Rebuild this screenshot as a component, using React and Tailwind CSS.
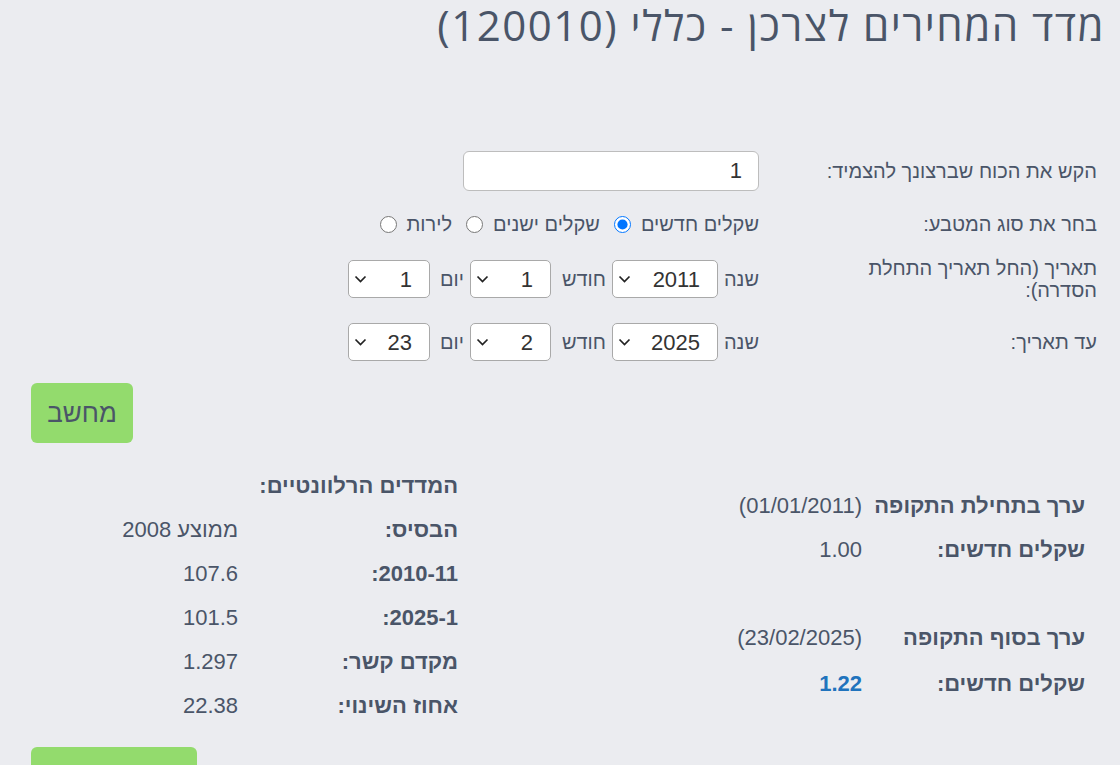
import { useState } from "react";

function Chevron() {
  return (
    <svg
      className="pointer-events-none absolute left-[6px] top-1/2 -translate-y-1/2"
      width="13"
      height="8"
      viewBox="0 0 13 8"
      fill="none"
    >
      <path d="M1.5 1.5l5 5 5-5" stroke="#222" strokeWidth="1.7" />
    </svg>
  );
}

function Bchira({ value, width }) {
  return (
    <div className={`relative ${width}`}>
      <select
        defaultValue={value}
        className="h-[38px] w-full appearance-none rounded-[5px] border border-[#a9a9a9] bg-white pr-[17px] pl-[30px] text-[22px] text-[#333]"
      >
        <option value={value}>{value}</option>
      </select>
      <Chevron />
    </div>
  );
}

function ShuratTaarich({ label, shana, chodesh, yom, className }) {
  return (
    <div className={`flex items-center ${className}`}>
      <div className="w-[290px] text-[20px] leading-[22px]">{label}</div>
      <div className="ms-[48px] flex items-center text-[20px]">
        <span>שנה</span>
        <div className="ms-[6px]">
          <Bchira value={shana} width="w-[106px]" />
        </div>
        <span className="ms-[6px]">חודש</span>
        <div className="ms-[11px]">
          <Bchira value={chodesh} width="w-[81px]" />
        </div>
        <span className="ms-[6px]">יום</span>
        <div className="ms-[10px]">
          <Bchira value={yom} width="w-[82px]" />
        </div>
      </div>
    </div>
  );
}

export default function App() {
  const [matbea, setMatbea] = useState("new");

  const madadim = [
    ["הבסיס:", "ממוצע 2008"],
    ["2010-11:", "107.6"],
    ["2025-1:", "101.5"],
    ["מקדם קשר:", "1.297"],
    ["אחוז השינוי:", "22.38"],
  ];

  return (
    <div
      dir="rtl"
      className="min-h-screen bg-[#ebecf0] text-[#4a5568] font-['Liberation_Sans',Arial,sans-serif]"
    >
      {/* KOTERET */}
      <h1 className="pr-[15px] pt-[1px] text-[42px] leading-[48px] tracking-[1.5px] font-['Open_Sans','DejaVu_Sans',sans-serif]">
        מדד המחירים לצרכן - כללי (120010)
      </h1>

      {/* TOFES */}
      <div className="mt-[102px] pr-[23px]">
        <div className="flex items-center">
          <div className="w-[290px] text-[20px]">הקש את הכוח שברצונך להצמיד:</div>
          <input
            type="text"
            defaultValue="1"
            className="ms-[48px] h-[40px] w-[296px] rounded-[6px] border border-[#bdbdbd] bg-white px-[16px] text-[22px] text-[#333]"
          />
        </div>

        <div className="mt-[20px] flex h-[26px] items-center">
          <div className="w-[290px] text-[20px]">בחר את סוג המטבע:</div>
          <div className="ms-[48px] flex items-center text-[20px]">
            <label className="flex items-center">
              שקלים חדשים
              <input
                type="radio"
                name="matbea"
                checked={matbea === "new"}
                onChange={() => setMatbea("new")}
                className="ms-[10px] h-[17px] w-[17px]"
              />
            </label>
            <label className="ms-[14px] flex items-center">
              שקלים ישנים
              <input
                type="radio"
                name="matbea"
                checked={matbea === "old"}
                onChange={() => setMatbea("old")}
                className="ms-[10px] h-[17px] w-[17px]"
              />
            </label>
            <label className="ms-[14px] flex items-center">
              לירות
              <input
                type="radio"
                name="matbea"
                checked={matbea === "lira"}
                onChange={() => setMatbea("lira")}
                className="ms-[10px] h-[17px] w-[17px]"
              />
            </label>
          </div>
        </div>

        <ShuratTaarich
          className="mt-[20px]"
          label="תאריך (החל תאריך התחלת הסדרה):"
          shana="2011"
          chodesh="1"
          yom="1"
        />
        <ShuratTaarich
          className="mt-[22px]"
          label="עד תאריך:"
          shana="2025"
          chodesh="2"
          yom="23"
        />
      </div>

      {/* KAFTOR */}
      <div className="mt-[22px] flex justify-end pl-[31px]">
        <button className="h-[60px] w-[102px] rounded-[6px] bg-[#93db6d] text-[26px] text-[#4a5568]">
          מחשב
        </button>
      </div>

      {/* TOTZAOT */}
      <div className="mt-[20px] flex items-center pr-[35px] text-[22px]">
        <div className="w-[360px]">
          <div className="flex h-11 items-center">
            <div className="w-[223px] font-bold">ערך בתחילת התקופה</div>
            <div>(01/01/2011)</div>
          </div>
          <div className="flex h-11 items-center">
            <div className="w-[223px] font-bold">שקלים חדשים:</div>
            <div>1.00</div>
          </div>
          <div className="h-11"></div>
          <div className="flex h-11 items-center">
            <div className="w-[223px] font-bold">ערך בסוף התקופה</div>
            <div>(23/02/2025)</div>
          </div>
          <div className="flex h-[47px] items-center">
            <div className="w-[223px] font-bold">שקלים חדשים:</div>
            <div className="font-bold text-[#2073bd]">1.22</div>
          </div>
        </div>

        <div className="ms-[267px]">
          <div className="flex h-11 items-center font-bold">המדדים הרלוונטיים:</div>
          {madadim.map(([tavit, erech]) => (
            <div key={tavit} className="flex h-11 items-center">
              <div className="w-[220px] font-bold">{tavit}</div>
              <div>{erech}</div>
            </div>
          ))}
        </div>
      </div>

      <div className="mt-[20px] flex justify-end pl-[31px]">
        <button className="h-[60px] w-[166px] rounded-[6px] bg-[#93db6d] text-[26px]">
          חישוב מחדש
        </button>
      </div>
    </div>
  );
}
